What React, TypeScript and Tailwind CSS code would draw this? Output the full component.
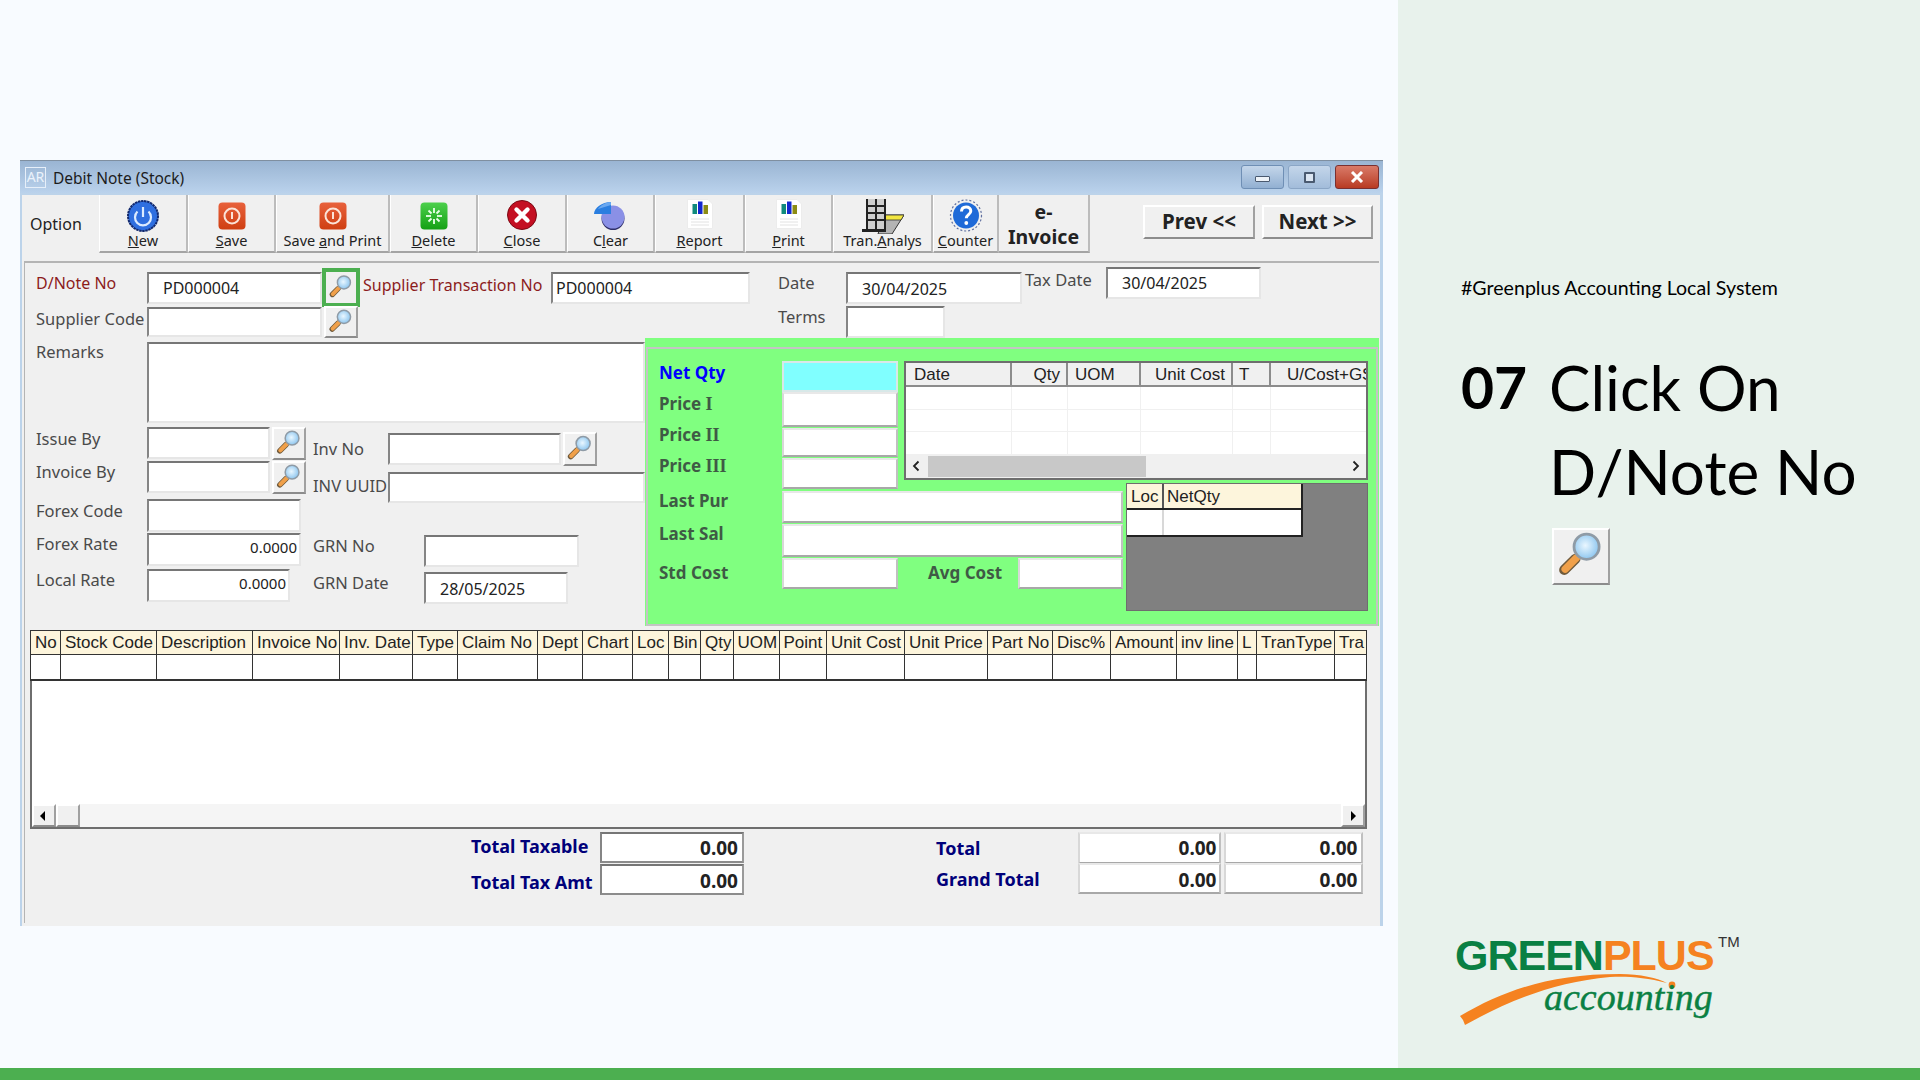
import type { ReactNode } from "react"

const sunken = "border-2 border-t-[#767676] border-l-[#858585] border-b-[#e6e6e6] border-r-[#e6e6e6] bg-white text-[#222] overflow-hidden whitespace-nowrap"
const totalBox = "border-2 border-t-[#767676] border-l-[#858585] border-b-[#8c8c8c] border-r-[#9a9a9a] bg-white text-[#222] whitespace-nowrap"
const greenCell = "border-2 border-t-[#e8e8e8] border-l-[#d8d8d8] border-b-[#a8a8a8] border-r-[#c0c0c0] bg-white"
const raised = "border-2 border-t-white border-l-white border-b-[#8c8c8c] border-r-[#a0a0a0] bg-[#f0f0f0]"

const Box = ({ className, children }: { className: string; children?: ReactNode }) => (
  <div className={`${sunken} ${className}`}>{children}</div>
)

const Label = ({ className, children }: { className?: string; children: ReactNode }) => (
  <div className={`shrink-0 whitespace-nowrap text-[16.5px] leading-[22px] text-[#4a4a4a] ${className ?? ""}`}>{children}</div>
)

const Magnifier = () => (
  <svg viewBox="0 0 58 57" className="h-full w-full">
    <defs>
      <radialGradient id="lens" cx="45%" cy="45%" r="60%">
        <stop offset="0%" stopColor="#eaf7ff" />
        <stop offset="100%" stopColor="#86c2ee" />
      </radialGradient>
    </defs>
    <line x1="11" y1="43" x2="23" y2="31" stroke="#6f5a3c" strokeWidth="11" strokeLinecap="round" />
    <line x1="12" y1="42" x2="24" y2="30" stroke="#f0a04a" strokeWidth="8" strokeLinecap="round" />
    <circle cx="35" cy="18" r="13.5" fill="url(#lens)" stroke="#8f9ba6" strokeWidth="3" />
  </svg>
)

const SearchBtn = ({ className }: { className: string }) => (
  <div className={`${raised} shrink-0 ${className}`}>
    <Magnifier />
  </div>
)

const NewIcon = () => (
  <svg viewBox="0 0 32 32" className="h-[32px] w-[32px]">
    <circle cx="16" cy="16" r="15" fill="#2f6fe0" stroke="#12296e" strokeWidth="2" strokeDasharray="2.5 0.6" />
    <path d="M10.5 11.5a8 8 0 1 0 11 0" fill="none" stroke="#dcebff" strokeWidth="2.2" />
    <line x1="16" y1="7" x2="16" y2="17" stroke="#dcebff" strokeWidth="2.2" />
  </svg>
)

const SaveIcon = () => (
  <svg viewBox="0 0 28 28" className="mb-[2px] h-[28px] w-[28px]">
    <defs>
      <linearGradient id="saveFill" x1="0" y1="0" x2="0" y2="1">
        <stop offset="0%" stopColor="#e8613c" />
        <stop offset="100%" stopColor="#cf3f12" />
      </linearGradient>
    </defs>
    <rect x="0.5" y="0.5" width="27" height="27" rx="4" fill="url(#saveFill)" />
    <circle cx="14" cy="14" r="7.5" fill="none" stroke="#fbe3d8" strokeWidth="2" />
    <line x1="14" y1="10" x2="14" y2="17" stroke="#fbe3d8" strokeWidth="2" />
  </svg>
)

const DeleteIcon = () => (
  <svg viewBox="0 0 28 28" className="mb-[2px] h-[28px] w-[28px]">
    <defs>
      <linearGradient id="delFill" x1="0" y1="0" x2="0" y2="1">
        <stop offset="0%" stopColor="#4cd04c" />
        <stop offset="100%" stopColor="#14a014" />
      </linearGradient>
    </defs>
    <rect x="0.5" y="0.5" width="27" height="27" rx="4" fill="url(#delFill)" />
    <g stroke="#eaffea" strokeWidth="1.8">
      <line x1="14" y1="6" x2="14" y2="11" />
      <line x1="14" y1="17" x2="14" y2="22" />
      <line x1="6" y1="14" x2="11" y2="14" />
      <line x1="17" y1="14" x2="22" y2="14" />
      <line x1="8.5" y1="8.5" x2="11.5" y2="11.5" />
      <line x1="16.5" y1="16.5" x2="19.5" y2="19.5" />
      <line x1="19.5" y1="8.5" x2="16.5" y2="11.5" />
      <line x1="11.5" y1="16.5" x2="8.5" y2="19.5" />
    </g>
  </svg>
)

const CloseIcon = () => (
  <svg viewBox="0 0 30 30" className="mb-[2px] h-[30px] w-[30px]">
    <circle cx="15" cy="15" r="14.5" fill="#c40f22" stroke="#7a0a14" strokeWidth="1" />
    <path d="M9.5 9.5l11 11M20.5 9.5l-11 11" stroke="#fff" strokeWidth="4.4" strokeLinecap="round" />
  </svg>
)

const ClearIcon = () => (
  <svg viewBox="0 0 33 28" className="mb-[2px] h-[28px] w-[33px]">
    <circle cx="19" cy="16.5" r="11.5" fill="#30306a" />
    <circle cx="19" cy="15" r="11.5" fill="#8a90e6" />
    <path d="M17 0L17 12 0 12C0 6 8 0 17 0z" fill="#2a7ee0" />
    <path d="M17 0L17 3 4 7C6 4 11 0 17 0z" fill="#6aa8f0" />
  </svg>
)

const DocIcon = () => (
  <svg viewBox="0 0 26 30" className="mb-[3px] h-[30px] w-[26px]">
    <path d="M0.5 0.5H21L25.5 5V29.5H0.5z" fill="#fff" stroke="#ececec" />
    <rect x="5.5" y="5" width="4.5" height="10" fill="#108a7c" />
    <rect x="11" y="2.5" width="4.5" height="12.5" fill="#1428d0" />
    <rect x="16.5" y="6" width="4.5" height="9" fill="#8c8c14" />
    <g stroke="#e2e2e2" strokeWidth="1">
      <line x1="4" y1="20" x2="22" y2="20" />
      <line x1="4" y1="23" x2="22" y2="23" />
      <line x1="4" y1="26" x2="22" y2="26" />
    </g>
  </svg>
)

const TranIcon = () => (
  <svg viewBox="0 0 42 35" className="-mb-[2px] h-[35px] w-[42px]">
    <path d="M22 16H42L30 35H16z" fill="#b4b4b4" stroke="#333" strokeWidth="1" />
    <path d="M23 16H42L39 21H22z" fill="#f2e640" stroke="#333" strokeWidth="0.8" />
    <rect x="5" y="0" width="18" height="30" fill="#cfcfcf" />
    <g stroke="#222" strokeWidth="2" fill="none">
      <line x1="5" y1="0" x2="5" y2="31" />
      <line x1="14" y1="0" x2="14" y2="31" />
      <line x1="23" y1="0" x2="23" y2="31" />
      <line x1="5" y1="7" x2="23" y2="7" />
      <line x1="5" y1="14" x2="23" y2="14" />
      <line x1="5" y1="21" x2="23" y2="21" />
      <line x1="0" y1="31.5" x2="24" y2="31.5" strokeWidth="3" />
    </g>
  </svg>
)

const CounterIcon = () => (
  <svg viewBox="0 0 40 33" className="h-[33px] w-[40px]">
    <circle cx="20" cy="16.5" r="15.5" fill="none" stroke="#6070a0" strokeWidth="1.2" strokeDasharray="2 2" />
    <circle cx="20" cy="16.5" r="13" fill="#1f6ad8" />
    <path d="M15.5 12.5c0-3 2-4.5 4.7-4.5s4.6 1.6 4.6 4c0 3.6-4.5 3.6-4.5 7.2" fill="none" stroke="#fff" strokeWidth="3" />
    <circle cx="20.3" cy="24" r="1.9" fill="#fff" />
  </svg>
)

const toolButtons = [
  { w: "w-[89px]", icon: <NewIcon />, label: <><u>N</u>ew</> },
  { w: "w-[88px]", icon: <SaveIcon />, label: <><u>S</u>ave</> },
  { w: "w-[114px]", icon: <SaveIcon />, label: <>Save <u>a</u>nd Print</> },
  { w: "w-[88px]", icon: <DeleteIcon />, label: <><u>D</u>elete</> },
  { w: "w-[89px]", icon: <CloseIcon />, label: <><u>C</u>lose</> },
  { w: "w-[88px]", icon: <ClearIcon />, label: <>C<u>l</u>ear</> },
  { w: "w-[90px]", icon: <DocIcon />, label: <><u>R</u>eport</> },
  { w: "w-[88px]", icon: <DocIcon />, label: <><u>P</u>rint</> },
  { w: "w-[100px]", icon: <TranIcon />, label: <>Tran.<u>A</u>nalys</> },
  { w: "w-[66px]", icon: <CounterIcon />, label: <><u>C</u>ounter</> },
]

const columns = [
  { label: "No", w: "w-[31px]" },
  { label: "Stock Code", w: "w-[96px]" },
  { label: "Description", w: "w-[96px]" },
  { label: "Invoice No", w: "w-[87px]" },
  { label: "Inv. Date", w: "w-[73px]" },
  { label: "Type", w: "w-[45px]" },
  { label: "Claim No", w: "w-[80px]" },
  { label: "Dept", w: "w-[45px]" },
  { label: "Chart", w: "w-[50px]" },
  { label: "Loc", w: "w-[36px]" },
  { label: "Bin", w: "w-[32px]" },
  { label: "Qty", w: "w-[32.5px]" },
  { label: "UOM", w: "w-[46px]" },
  { label: "Point", w: "w-[47.5px]" },
  { label: "Unit Cost", w: "w-[78px]" },
  { label: "Unit Price", w: "w-[82.5px]" },
  { label: "Part No", w: "w-[65.5px]" },
  { label: "Disc%", w: "w-[58px]" },
  { label: "Amount", w: "w-[66px]" },
  { label: "inv line", w: "w-[61px]" },
  { label: "L", w: "w-[19px]" },
  { label: "TranType", w: "w-[78px]" },
  { label: "Tra", w: "w-[32px]" },
]

const costColumns = [
  { label: "Date", w: "w-[106px]", align: "pl-[8px] text-left" },
  { label: "Qty", w: "w-[56px]", align: "pr-[6px] text-right" },
  { label: "UOM", w: "w-[73px]", align: "pl-[7px] text-left" },
  { label: "Unit Cost", w: "w-[92px]", align: "pr-[6px] text-right" },
  { label: "T", w: "w-[38px]", align: "pl-[6px] text-left" },
  { label: "U/Cost+GST", w: "w-[97px]", align: "pl-[16px] text-left" },
]

const Roman = ({ children }: { children: ReactNode }) => (
  <span className="font-['Liberation_Serif',serif] text-[18px] font-bold">{children}</span>
)

const GreenLabel = ({ className, children }: { className: string; children: ReactNode }) => (
  <div className={`shrink-0 whitespace-nowrap pl-[11px] text-[17px] font-bold leading-[24px] text-[#3f5a45] ${className}`}>{children}</div>
)

const Toolbar = () => (
  <div className="flex h-[58px] items-stretch">
    <div className="flex w-[77px] items-center pl-[8px] text-[16px] text-[#222]">Option</div>
    {toolButtons.map((b, i) => (
      <div key={i} className={`${b.w} flex shrink-0 flex-col items-center border-r-2 border-b-2 border-r-[#bcbcbc] border-b-[#a4a4a4] border-l border-l-white`}>
        <div className="flex h-[37px] items-end justify-center">{b.icon}</div>
        <div className="-mt-[2px] whitespace-nowrap text-[14.5px] leading-[20px] text-[#222]">{b.label}</div>
      </div>
    ))}
    <div className="flex w-[91px] shrink-0 flex-col items-center border-r-2 border-b-2 border-r-[#bcbcbc] border-b-[#a4a4a4] pt-[4px] text-[19.5px] font-bold leading-[25px] text-[#222]">
      <span>e-</span>
      <span>Invoice</span>
    </div>
    <div className={`${raised} ml-[53px] mt-[10px] flex h-[34px] w-[112px] items-center justify-center pb-[2px] text-[20.5px] font-bold text-[#222]`}>{"Prev <<"}</div>
    <div className={`${raised} ml-[7px] mt-[10px] flex h-[34px] w-[111px] items-center justify-center pb-[2px] text-[20.5px] font-bold text-[#222]`}>{"Next >>"}</div>
  </div>
)

const HeaderRows = () => (
  <div className="mt-[4px] flex flex-col">
    <div className="flex h-[40px] items-start">
      <Label className="mt-[5px] w-[122px] pl-[11px] !text-[16px] !text-[#8c1c1c]">D/Note No</Label>
      <Box className="mt-[5px] h-[32px] w-[175px] shrink-0 pl-[14px] text-[16px] leading-[28px]">PD000004</Box>
      <div className="mt-[1px] h-[39px] w-[38px] shrink-0 border-[4px] border-[#4caf50] bg-[#f0f0f0] p-[1px]">
        <Magnifier />
      </div>
      <Label className="ml-[3px] mt-[7px] w-[188px] !text-[16px] !text-[#8c1c1c]">Supplier Transaction No</Label>
      <Box className="mt-[5px] h-[32px] w-[199px] shrink-0 pl-[3px] text-[16px] leading-[28px]">PD000004</Box>
      <Label className="mt-[5px] w-[96px] pl-[28px]">Date</Label>
      <Box className="mt-[5px] h-[32px] w-[176px] shrink-0 pl-[14px] text-[16px] leading-[30px]">30/04/2025</Box>
      <Label className="ml-[3px] mt-[2px] w-[81px]">Tax Date</Label>
      <Box className="h-[32px] w-[155px] shrink-0 pl-[14px] text-[16px] leading-[28px]">30/04/2025</Box>
    </div>
    <div className="flex h-[31px] items-start">
      <Label className="mt-[1px] w-[122px] pl-[11px]">Supplier Code</Label>
      <Box className="h-[30px] w-[175px] shrink-0" />
      <SearchBtn className="-mt-[1px] ml-[2px] h-[32px] w-[34px]" />
      <Label className="-mt-[1px] ml-[420px] w-[68px]">Terms</Label>
      <Box className="-mt-[1px] h-[32px] w-[99px] shrink-0" />
    </div>
  </div>
)

const LeftForm = () => (
  <div className="w-[620px] shrink-0 pt-[4px]">
    <div className="flex h-[81px]">
      <Label className="-mt-[1px] w-[122px] pl-[11px]">Remarks</Label>
      <Box className="h-[81px] w-[498px]" />
    </div>
    <div className="mt-[4px] flex">
      <div className="flex w-[288px] shrink-0 flex-col">
        <div className="flex h-[34px]">
          <Label className="mt-[1px] w-[122px] pl-[11px]">Issue By</Label>
          <Box className="h-[32px] w-[123px] shrink-0" />
          <SearchBtn className="ml-[2px] h-[33px] w-[34px]" />
        </div>
        <div className="flex h-[38px]">
          <Label className="w-[122px] pl-[11px]">Invoice By</Label>
          <Box className="h-[32px] w-[123px] shrink-0" />
          <SearchBtn className="ml-[2px] h-[33px] w-[34px]" />
        </div>
        <div className="flex h-[34px]">
          <Label className="mt-[1px] w-[122px] pl-[11px]">Forex Code</Label>
          <Box className="h-[33px] w-[154px] shrink-0" />
        </div>
        <div className="flex h-[36px]">
          <Label className="w-[122px] pl-[11px]">Forex Rate</Label>
          <Box className="h-[33px] w-[154px] shrink-0 pr-[2px] text-right text-[15px] leading-[25px]">0.0000</Box>
        </div>
        <div className="flex h-[33px]">
          <Label className="w-[122px] pl-[11px]">Local Rate</Label>
          <Box className="h-[33px] w-[143px] shrink-0 pr-[2px] text-right text-[15px] leading-[25px]">0.0000</Box>
        </div>
      </div>
      <div className="flex flex-col pt-[6px]">
        <div className="flex h-[39px]">
          <Label className="mt-[5px] w-[75px]">Inv No</Label>
          <Box className="h-[32px] w-[173px] shrink-0" />
          <SearchBtn className="-mt-[1px] ml-[2px] h-[34px] w-[34px]" />
        </div>
        <div className="flex h-[63px]">
          <Label className="mt-[3px] w-[75px]">INV UUID</Label>
          <Box className="h-[31px] w-[257px] shrink-0" />
        </div>
        <div className="flex h-[37px]">
          <Label className="w-[111px]">GRN No</Label>
          <Box className="h-[32px] w-[155px] shrink-0" />
        </div>
        <div className="flex">
          <Label className="w-[111px]">GRN Date</Label>
          <Box className="h-[32px] w-[144px] shrink-0 pl-[14px] text-[16px] leading-[30px]">28/05/2025</Box>
        </div>
      </div>
    </div>
  </div>
)

const CostGrid = () => (
  <div className="ml-[6px] flex h-[119px] w-[464px] shrink-0 flex-col overflow-hidden border-2 border-[#6e6e6e] bg-white">
    <div className="flex h-[24px] shrink-0">
      {costColumns.map((c) => (
        <div key={c.label} className={`${c.w} ${c.align} shrink-0 overflow-hidden whitespace-nowrap border-r-2 border-b-2 border-r-[#8c8c8c] border-b-[#8c8c8c] bg-[#f0f0f0] font-['Liberation_Sans',sans-serif] text-[17px] leading-[24px] text-[#222]`}>{c.label}</div>
      ))}
    </div>
    {[0, 1, 2].map((r) => (
      <div key={r} className="flex h-[22.5px] shrink-0 border-b border-[#f0f0f0]">
        {costColumns.map((c) => (
          <div key={c.label} className={`${c.w} shrink-0 border-r border-[#f0f0f0]`} />
        ))}
      </div>
    ))}
    <div className="flex flex-1 items-center bg-[#f0f0f0]">
      <svg viewBox="0 0 10 12" className="ml-[5px] h-[12px] w-[10px]">
        <path d="M7.5 1.5L3 6l4.5 4.5" fill="none" stroke="#222" strokeWidth="1.8" />
      </svg>
      <div className="ml-[7px] h-[21px] w-[218px] bg-[#c8c8c8]" />
      <svg viewBox="0 0 10 12" className="ml-auto mr-[5px] h-[12px] w-[10px]">
        <path d="M2.5 1.5L7 6l-4.5 4.5" fill="none" stroke="#222" strokeWidth="1.8" />
      </svg>
    </div>
  </div>
)

const LocGrid = () => (
  <div className="ml-[3px] h-[128px] w-[242px] shrink-0 border border-[#6e6e6e] bg-[#808080]">
    <div className="w-[176px] border-r-2 border-b-2 border-r-[#222] border-b-[#222] bg-white font-['Liberation_Sans',sans-serif] text-[17px] leading-[26px] text-[#222]">
      <div className="flex h-[26px] border-b-2 border-b-[#222] bg-[#fdf5dc]">
        <div className="w-[37px] border-r-2 border-r-[#555] pl-[4px]">Loc</div>
        <div className="pl-[3px]">NetQty</div>
      </div>
      <div className="flex h-[25px]">
        <div className="w-[37px] border-r-2 border-r-[#d8d8d8]" />
      </div>
    </div>
  </div>
)

const GreenPanel = () => (
  <div className="h-[288px] w-[734px] shrink-0 bg-[#80ff80] pt-[9px]">
    <div className="ml-[1px] h-[279px] w-[732px] border-2 border-[#c4c4c4] pt-[12px]">
      <div className="flex h-[122px] items-start">
        <div className="flex w-[250px] shrink-0 flex-col">
          <div className="flex h-[31px]">
            <GreenLabel className="w-[134px] !text-[#0000ff]">Net Qty</GreenLabel>
            <div className="h-[31px] w-[116px] border-2 border-[#d8e8e8] bg-[#80ffff]" />
          </div>
          <div className="flex h-[36px]">
            <GreenLabel className="w-[134px]">Price <Roman>I</Roman></GreenLabel>
            <div className={`${greenCell} h-[35px] w-[116px]`} />
          </div>
          <div className="flex h-[30px]">
            <GreenLabel className="mt-[-5px] w-[134px]">Price <Roman>II</Roman></GreenLabel>
            <div className={`${greenCell} h-[29px] w-[116px]`} />
          </div>
          <div className="flex h-[31px]">
            <GreenLabel className="mt-[-4px] w-[134px]">Price <Roman>III</Roman></GreenLabel>
            <div className={`${greenCell} h-[31px] w-[116px]`} />
          </div>
        </div>
        <CostGrid />
      </div>
      <div className="flex">
        <div className="flex w-[475px] shrink-0 flex-col pt-[8px]">
          <div className="flex h-[33px]">
            <GreenLabel className="-mt-[2px] w-[134px]">Last Pur</GreenLabel>
            <div className={`${greenCell} h-[32px] w-[341px]`} />
          </div>
          <div className="flex h-[34px]">
            <GreenLabel className="-mt-[2px] w-[134px]">Last Sal</GreenLabel>
            <div className={`${greenCell} h-[33px] w-[341px]`} />
          </div>
          <div className="flex">
            <GreenLabel className="mt-[3px] w-[134px]">Std Cost</GreenLabel>
            <div className={`${greenCell} h-[31px] w-[116px]`} />
            <GreenLabel className="mt-[3px] w-[120px] pl-[30px]">Avg Cost</GreenLabel>
            <div className={`${greenCell} h-[31px] w-[105px]`} />
          </div>
        </div>
        <LocGrid />
      </div>
    </div>
  </div>
)

const LinesGrid = () => (
  <div className="ml-[5px] mt-[4px] flex h-[199px] w-[1337px] flex-col border-b-2 border-b-[#6e6e6e] bg-white font-['Liberation_Sans',sans-serif]">
    <div className="flex h-[25px] shrink-0">
      {columns.map((c) => (
        <div key={c.label} className={`${c.w} shrink-0 overflow-hidden whitespace-nowrap border-t border-r border-b border-[#333] bg-[#fdf5dc] pl-[4px] text-[17px] leading-[24px] text-[#222] first:border-l`}>{c.label}</div>
      ))}
    </div>
    <div className="flex h-[26px] shrink-0">
      {columns.map((c) => (
        <div key={c.label} className={`${c.w} shrink-0 border-r border-b-2 border-r-[#333] border-b-[#333] first:border-l first:border-l-[#333]`} />
      ))}
    </div>
    <div className="flex-1 border-l-2 border-r-2 border-[#6e6e6e]" />
    <div className="flex h-[23px] shrink-0 items-stretch border-l-2 border-l-[#6e6e6e] border-r-2 border-r-[#6e6e6e] bg-[#f5f5f5]">
      <div className={`${raised} flex w-[24px] items-center justify-center pr-[4px]`}>
        <div className="h-0 w-0 border-y-[5px] border-r-[5px] border-y-transparent border-r-black" />
      </div>
      <div className={`${raised} w-[24px]`} />
      <div className={`${raised} ml-auto flex w-[24px] items-center justify-center`}>
        <div className="h-0 w-0 border-y-[5px] border-l-[5px] border-y-transparent border-l-black" />
      </div>
    </div>
  </div>
)

const Totals = () => (
  <div className="flex flex-col font-bold">
    <div className="flex h-[34px] pt-[3px]">
      <div className="ml-[446px] mt-[3px] w-[129px] whitespace-nowrap text-[18px] leading-[22px] text-[#00007a]">Total Taxable</div>
      <div className={`${totalBox} h-[31px] w-[144px] pr-[4px] text-right text-[19px] leading-[29px]`}>0.00</div>
      <div className="ml-[192px] mt-[5px] w-[141.5px] text-[18px] leading-[22px] text-[#00007a]">Total</div>
      <div className={`${greenCell} h-[32px] w-[143px] pr-[2px] text-right text-[19px] leading-[29px] text-[#222]`}>0.00</div>
      <div className={`${greenCell} ml-[3px] h-[32px] w-[139px] pr-[3px] text-right text-[19px] leading-[29px] text-[#222]`}>0.00</div>
    </div>
    <div className="flex h-[32px]">
      <div className="ml-[446px] mt-[8px] w-[129px] whitespace-nowrap text-[18px] leading-[22px] text-[#00007a]">Total Tax Amt</div>
      <div className={`${totalBox} mt-[1px] h-[31px] w-[144px] pr-[4px] text-right text-[19px] leading-[31px]`}>0.00</div>
      <div className="ml-[192px] mt-[5px] w-[141.5px] whitespace-nowrap text-[18px] leading-[22px] text-[#00007a]">Grand Total</div>
      <div className={`${greenCell} h-[31px] w-[143px] pr-[2px] text-right text-[19px] leading-[31px] text-[#222]`}>0.00</div>
      <div className={`${greenCell} ml-[3px] h-[31px] w-[139px] pr-[3px] text-right text-[19px] leading-[31px] text-[#222]`}>0.00</div>
    </div>
  </div>
)

const Logo = () => (
  <div className="relative -ml-[41px] h-[158px] w-[340px]">
    <svg viewBox="0 0 340 170" className="absolute left-0 top-0 h-[170px] w-[340px]">
      <path d="M40 106C85 80 130 64 200 64C220 64 238 68 247 73C225 67 205 66 190 67C135 72 90 90 45 115L43 110z" fill="#f58220" />
      <circle cx="252" cy="75" r="3.4" fill="#f58220" />
    </svg>
    <div className="absolute left-[35px] top-[20px] flex whitespace-nowrap font-['Liberation_Sans',sans-serif] text-[43px] font-bold leading-[50px] tracking-[-1px]">
      <span className="text-[#0a8043]">GREEN</span>
      <span className="text-[#f58220]">PLUS</span>
    </div>
    <div className="absolute left-[298px] top-[23px] font-['Liberation_Sans',sans-serif] text-[15px] leading-[18px] text-[#333]">TM</div>
    <div className="absolute left-[124px] top-[65px] whitespace-nowrap font-['Liberation_Serif',serif] text-[38px] italic leading-[44px] text-[#0a8043] [-webkit-text-stroke:0.4px_#0a8043]">accounting</div>
  </div>
)

export default function App() {
  return (
    <div className="flex h-[1080px] w-[1920px] flex-col overflow-hidden font-['Noto_Sans',sans-serif]">
      <div className="flex min-h-0 flex-1">
        <div className="w-[1398px] shrink-0 bg-[#f8fbff] pl-[20px] pt-[160px]">
          <div className="flex h-[766px] w-[1363px] flex-col border-t border-t-[#7f8fa0] bg-[#bcd3ea]">
            <div className="flex h-[32px] shrink-0 items-center bg-gradient-to-b from-[#9ab5d3] to-[#bad2ec] pl-[5px] pr-[4px]">
              <div className="flex h-[21px] w-[21px] items-center justify-center border border-[#e6eff9] text-[14px] leading-none text-[#eaf2fb]">AR</div>
              <span className="ml-[7px] pt-[3px] text-[15.5px] text-[#1c1c1c]">Debit Note (Stock)</span>
              <div className="ml-auto flex gap-[4px]">
                <div className="flex h-[24px] w-[43px] items-center justify-center rounded-[3px] border border-[#6f8fb5] bg-gradient-to-b from-[#c4d6ea] to-[#92b0d2]">
                  <div className="mt-[3px] h-[6px] w-[15px] rounded-[1px] border border-[#4a5a70] bg-[#eef3f8]" />
                </div>
                <div className="flex h-[24px] w-[43px] items-center justify-center rounded-[3px] border border-[#8ba6c6] bg-gradient-to-b from-[#c4d6ea] to-[#a2bcda]">
                  <div className="h-[11px] w-[11px] rounded-[1px] border-2 border-[#4a5a70] bg-[#dce6f2]" />
                </div>
                <div className="flex h-[24px] w-[44px] items-center justify-center rounded-[3px] border border-[#7a3030] bg-gradient-to-b from-[#d97a68] to-[#b83a22]">
                  <svg viewBox="0 0 14 12" className="h-[12px] w-[14px]">
                    <path d="M2 1l10 10M12 1L2 11" stroke="#fff" strokeWidth="3" />
                  </svg>
                </div>
              </div>
            </div>
            <div className="ml-[2px] mr-[3px] mt-[2px] flex-1 bg-[#f0f0f0]">
              <Toolbar />
              <div className="ml-[2px] mt-[8px] h-[662px] w-[1355px] border-t-2 border-l border-[#b4b4b4]">
                <HeaderRows />
                <div className="flex">
                  <LeftForm />
                  <GreenPanel />
                </div>
                <LinesGrid />
                <Totals />
              </div>
            </div>
          </div>
        </div>
        <div className="flex flex-1 flex-col bg-[#e8f2ec] pl-[63px] pt-[276px] font-['Lato',sans-serif] text-black">
          <div className="text-[19.6px] leading-[24px]">#Greenplus Accounting Local System</div>
          <div className="mt-[45px] flex">
            <div className="w-[88px] text-[57px] font-bold leading-[84px]">07</div>
            <div className="flex flex-col">
              <div className="text-[62px] leading-[84px]">Click On</div>
              <div className="text-[62px] leading-[84px]">D/Note No</div>
              <div className={`${raised} ml-[3px] mt-[15px] h-[57px] w-[58px]`}>
                <Magnifier />
              </div>
            </div>
          </div>
          <div className="mt-auto">
            <Logo />
          </div>
        </div>
      </div>
      <div className="h-[12px] shrink-0 bg-[#4caf50]" />
    </div>
  )
}
